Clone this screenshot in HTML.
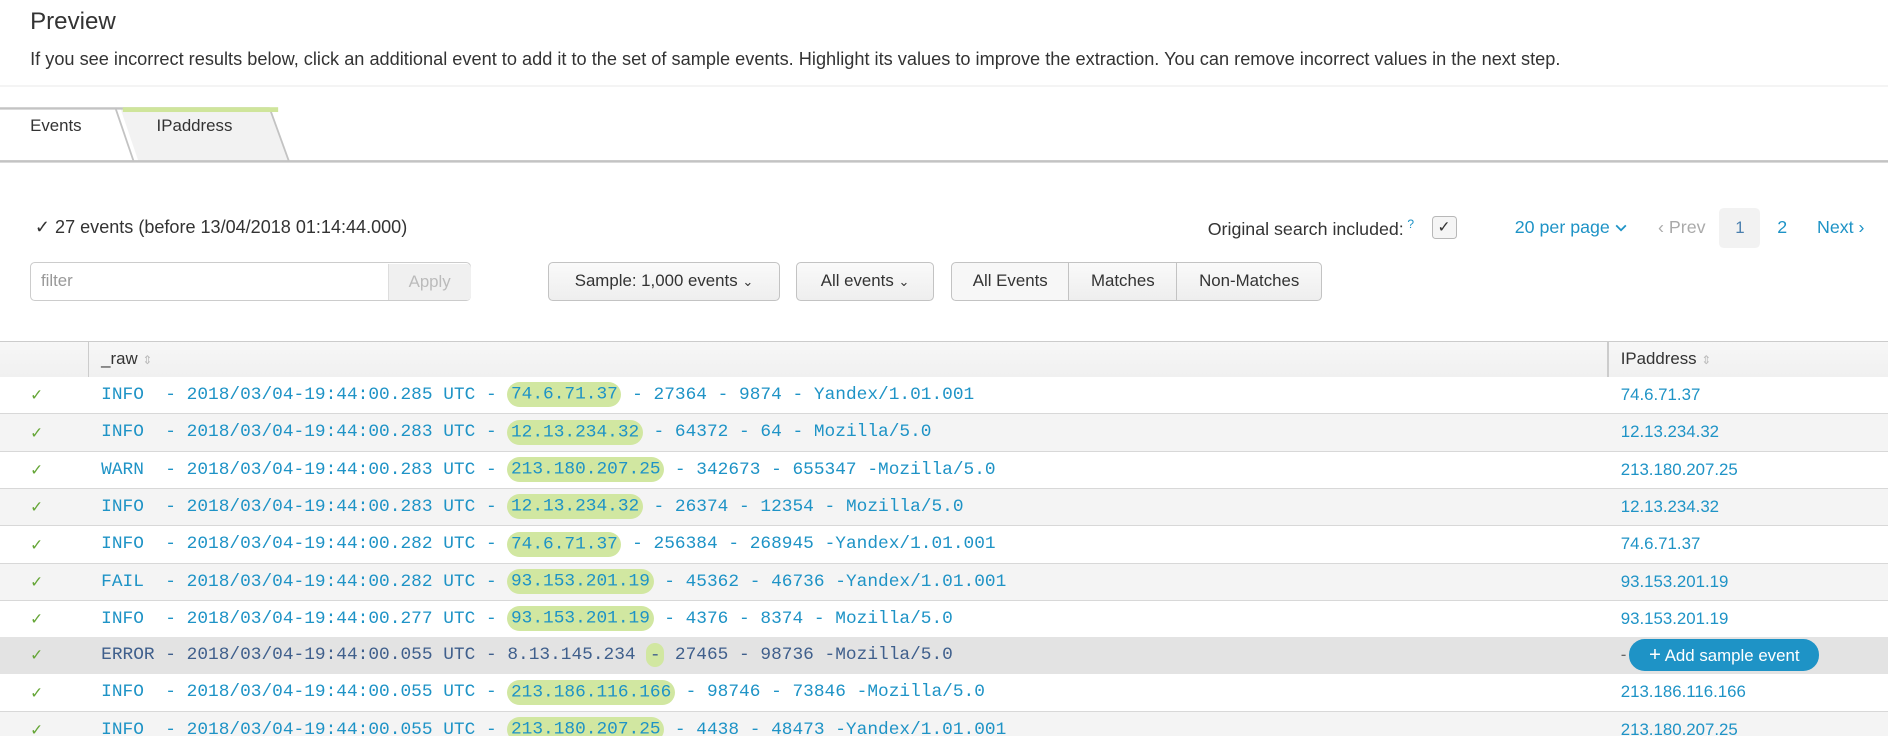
<!DOCTYPE html>
<html><head><meta charset="utf-8"><style>
html,body{margin:0;padding:0;background:#fff;overflow:hidden}
body{width:1888px;height:736px}
#z{zoom:1.2041;width:1568px;height:611px;position:relative;font-family:"Liberation Sans",sans-serif;color:#333;font-size:14px}
.a{position:absolute;white-space:nowrap}
.btn{position:absolute;box-sizing:border-box;height:32px;top:218px;border:1px solid #c3c3c3;border-radius:4px;background:linear-gradient(#fafafa,#eeeeee);text-align:center;line-height:30px;font-size:14px;color:#333}
.row{position:absolute;left:0;width:1568px;height:31px;border-bottom:1px solid #d8d8d8;box-sizing:border-box}
.ck{position:absolute;left:25px;top:7px;color:#65a637;font-size:13px}
.raw{position:absolute;left:84px;top:0;line-height:30px;font-family:"Liberation Mono",monospace;font-size:14.8px;white-space:pre;color:#1e93c6}
.h{background:#d1e7a1;border-radius:11px;padding:2px 3px}
.ip{position:absolute;left:1346px;top:0;line-height:30px;color:#1e93c6;font-size:14px}
.blue{color:#1e93c6}
</style></head><body><div id="z">
<div class="a" style="left:25px;top:7px;font-size:20px;">Preview</div>
<div class="a" style="left:25px;top:41px;font-size:15.1px;">If you see incorrect results below, click an additional event to add it to the set of sample events. Highlight its values to improve the extraction. You can remove incorrect values in the next step.</div>
<div class="a" style="left:0;top:71px;width:1568px;height:1px;background:#f4f4f4"></div>
<svg class="a" style="left:0;top:88px" width="1568" height="48">
<polygon points="100,2 224,2 240,46 115,46" fill="#f2f2f2"/>
<line x1="0" y1="2" x2="224" y2="2" stroke="#c3c3c3" stroke-width="2"/>
<line x1="96" y1="2" x2="111" y2="46" stroke="#c3c3c3" stroke-width="1.5"/>
<line x1="224" y1="2" x2="240" y2="46" stroke="#c3c3c3" stroke-width="1.5"/>
<rect x="102" y="1" width="129" height="4" fill="#cfe59b"/>
<line x1="0" y1="46" x2="1568" y2="46" stroke="#c3c3c3" stroke-width="2"/>
</svg>
<div class="a" style="left:25px;top:96px;">Events</div>
<div class="a" style="left:130px;top:96px;">IPaddress</div>
<div class="a" style="left:29px;top:180px;font-size:15px">✓ 27 events (before 13/04/2018 01:14:44.000)</div>
<div class="a" style="left:1003px;top:180px;font-size:14.8px">Original search included:<sup class="blue" style="font-size:10px;margin-left:3px">?</sup></div>
<div class="a" style="left:1189px;top:179px;width:19px;height:18px;border:1px solid #b8b8b8;border-radius:3px;background:#f5f5f5;text-align:center;line-height:18px;font-size:13px">✓</div>
<div class="a blue" style="left:1258px;top:180px;font-size:14.8px">20 per page</div>
<svg class="a" style="left:1341px;top:185px" width="10" height="8"><polyline points="1,2 5,6 9,2" fill="none" stroke="#1e93c6" stroke-width="1.5"/></svg>
<div class="a" style="left:1377px;top:180px;color:#aaa;font-size:14.8px">‹ Prev</div>
<div class="a" style="left:1428px;top:173px;width:34px;height:33px;background:#f2f2f2;border-radius:4px;text-align:center;line-height:33px;color:#4a7fae">1</div>
<div class="a blue" style="left:1476px;top:180px;font-size:14.8px">2</div>
<div class="a blue" style="left:1509px;top:180px;font-size:14.8px">Next ›</div>
<div class="a" style="left:25px;top:218px;width:366px;height:32px;box-sizing:border-box;border:1px solid #ccc;border-radius:4px;background:#fff"></div>
<div class="a" style="left:322px;top:219px;width:68px;height:30px;background:#f0f0f0;border-left:1px solid #ddd;border-radius:0 3px 3px 0;text-align:center;line-height:30px;color:#bbb">Apply</div>
<div class="a" style="left:34px;top:225px;color:#999">filter</div>
<div class="btn" style="left:455px;width:193px">Sample: 1,000 events <span style="font-size:11px">&#8964;</span></div>
<div class="btn" style="left:661px;width:115px">All events <span style="font-size:11px">&#8964;</span></div>
<div class="btn" style="left:790px;width:98px;border-radius:4px 0 0 4px;background:#f7f7f7">All Events</div>
<div class="btn" style="left:887px;width:91px;border-radius:0">Matches</div>
<div class="btn" style="left:977px;width:121px;border-radius:0 4px 4px 0">Non-Matches</div>
<div class="a" style="left:0;top:283px;width:1568px;height:31px;box-sizing:border-box;border-top:1px solid #ccc;border-bottom:1px solid #ccc;background:linear-gradient(#f7f7f7,#f0f0f0)"></div>
<div class="a" style="left:73px;top:283px;width:1px;height:31px;background:#ccc"></div>
<div class="a" style="left:1335px;top:283px;width:1px;height:31px;background:#ccc"></div>
<div class="a" style="left:84px;top:290px;">_raw <span style="color:#bbb;font-size:10px">⇕</span></div>
<div class="a" style="left:1346px;top:290px;">IPaddress <span style="color:#bbb;font-size:10px">⇕</span></div>

<div class="row" style="top:313px;background:#fff"><span class="ck">✓</span><span class="raw">INFO  - 2018/03/04-19:44:00.285 UTC - <span class="h">74.6.71.37</span> - 27364 - 9874 - Yandex/1.01.001</span><span class="ip">74.6.71.37</span></div>
<div class="row" style="top:344px;background:#f4f4f4"><span class="ck">✓</span><span class="raw">INFO  - 2018/03/04-19:44:00.283 UTC - <span class="h">12.13.234.32</span> - 64372 - 64 - Mozilla/5.0</span><span class="ip">12.13.234.32</span></div>
<div class="row" style="top:375px;background:#fff"><span class="ck">✓</span><span class="raw">WARN  - 2018/03/04-19:44:00.283 UTC - <span class="h">213.180.207.25</span> - 342673 - 655347 -Mozilla/5.0</span><span class="ip">213.180.207.25</span></div>
<div class="row" style="top:406px;background:#f4f4f4"><span class="ck">✓</span><span class="raw">INFO  - 2018/03/04-19:44:00.283 UTC - <span class="h">12.13.234.32</span> - 26374 - 12354 - Mozilla/5.0</span><span class="ip">12.13.234.32</span></div>
<div class="row" style="top:437px;background:#fff"><span class="ck">✓</span><span class="raw">INFO  - 2018/03/04-19:44:00.282 UTC - <span class="h">74.6.71.37</span> - 256384 - 268945 -Yandex/1.01.001</span><span class="ip">74.6.71.37</span></div>
<div class="row" style="top:468px;background:#f4f4f4"><span class="ck">✓</span><span class="raw">FAIL  - 2018/03/04-19:44:00.282 UTC - <span class="h">93.153.201.19</span> - 45362 - 46736 -Yandex/1.01.001</span><span class="ip">93.153.201.19</span></div>
<div class="row" style="top:499px;background:#fff"><span class="ck">✓</span><span class="raw">INFO  - 2018/03/04-19:44:00.277 UTC - <span class="h">93.153.201.19</span> - 4376 - 8374 - Mozilla/5.0</span><span class="ip">93.153.201.19</span></div>
<div class="row" style="top:529px;height:32px;background:#e3e3e3"><span class="ck">✓</span><span class="raw" style="color:#3f5f8c">ERROR - 2018/03/04-19:44:00.055 UTC - 8.13.145.234 <span class="h">-</span> 27465 - 98736 -Mozilla/5.0</span><span class="ip" style="color:#666">-</span>
<div class="a" style="left:1353px;top:2px;width:158px;height:26px;border-radius:13px;background:#1e93c6;color:#fff;line-height:26px;text-align:center;font-size:14px"><span style="font-size:17px">+</span> Add sample event</div></div>
<div class="row" style="top:560px;background:#fff"><span class="ck">✓</span><span class="raw">INFO  - 2018/03/04-19:44:00.055 UTC - <span class="h">213.186.116.166</span> - 98746 - 73846 -Mozilla/5.0</span><span class="ip">213.186.116.166</span></div>
<div class="row" style="top:591px;background:#f4f4f4"><span class="ck">✓</span><span class="raw">INFO  - 2018/03/04-19:44:00.055 UTC - <span class="h">213.180.207.25</span> - 4438 - 48473 -Yandex/1.01.001</span><span class="ip">213.180.207.25</span></div>
</div></body></html>
